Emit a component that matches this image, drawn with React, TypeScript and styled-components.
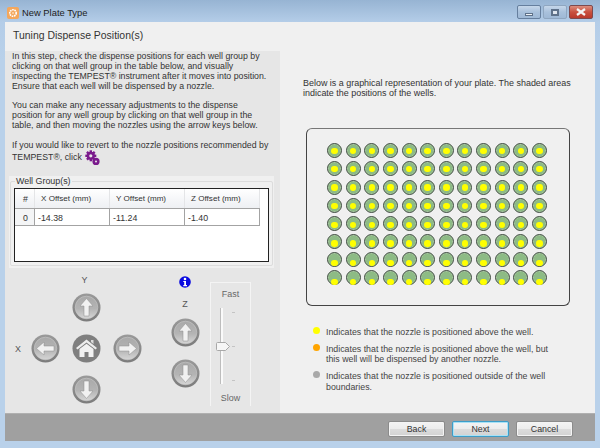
import React from "react";
import styled, { createGlobalStyle } from "styled-components";

const Global = createGlobalStyle`
  html, body { margin: 0; padding: 0; background: #b9d1ea; }
  * { box-sizing: border-box; }
`;

const Win = styled.div`
  width: 600px;
  height: 448px;
  display: flex;
  flex-direction: column;
  overflow: hidden;
  font-family: "Liberation Sans", Arial, sans-serif;
  font-size: 8.95px;
  line-height: 10px;
  white-space: nowrap;
  color: #333;
  background: linear-gradient(180deg, #97b4d3 0, #b4cde8 22px, #b9d1ea 60px);
`;

const TitleBar = styled.div`
  height: 22px;
  flex: none;
  display: flex;
  align-items: flex-start;
  padding-left: 7px;
`;

const AppIcon = styled.div`
  width: 12px;
  height: 12px;
  margin-top: 7px;
  border-radius: 2px;
  background: #f4a75c;
  display: flex;
  align-items: center;
  justify-content: center;
  flex: none;
`;

const Title = styled.span`
  margin: 7px 0 0 3px;
  font-size: 9.4px;
  line-height: 12px;
  color: #222;
`;

const WinButtons = styled.div`
  margin-left: auto;
  margin-right: 7px;
  margin-top: 5px;
  display: flex;
  gap: 2px;
`;

const WinButton = styled.div<{ $w: number; $close?: boolean; $dim?: boolean }>`
  width: ${(p) => p.$w}px;
  height: 14px;
  border: 1px solid ${(p) => (p.$close ? "#7d4a4e" : p.$dim ? "#8fa6c0" : "#667f9e")};
  border-radius: 2px;
  display: flex;
  align-items: center;
  justify-content: center;
  background: ${(p) =>
    p.$close
      ? "linear-gradient(180deg, #dc8d7e 0, #c9503f 50%, #b9392c 100%)"
      : "linear-gradient(180deg, #c6d7ea 0, #a9c1dc 50%, #9fb9d6 100%)"};
`;

const MinGlyph = styled.span`
  width: 8px;
  height: 3px;
  margin-top: 4px;
  background: #eef2f6;
  border: 1px solid #5f728a;
`;

const MaxGlyph = styled.span`
  width: 8px;
  height: 7px;
  background: #dfe6ee;
  border: 2px solid #5f728a;
`;

const Client = styled.div`
  flex: none;
  height: 419px;
  margin: 0 5px;
  display: flex;
  flex-direction: column;
  background: #f0f0f0;
`;

const Heading = styled.div`
  flex: none;
  height: 29px;
  padding: 6px 0 0 8px;
  font-size: 10.45px;
  line-height: 15px;
  color: #333;
`;

const Main = styled.div`
  flex: 1;
  display: flex;
  min-height: 0;
`;

const LeftPanel = styled.div`
  width: 275px;
  flex: none;
  background: #e6e6e6;
  padding: 1px 0 0 0;
  display: flex;
  flex-direction: column;
`;

const Instructions = styled.div`
  padding: 0 0 0 7px;
  height: 124px;
  flex: none;
  font-size: 8.78px;
`;

const Para = styled.p`
  margin: 0 0 9.6px;
  line-height: 9.9px;
`;

const Gear = styled.svg`
  vertical-align: -5px;
  margin-left: 1px;
`;

const GroupOuter = styled.div`
  margin-left: 4px;
  width: 265px;
  height: 92px;
  flex: none;
  background: #f0f0f0;
  padding: 1px 1px 0;
`;

const GroupBox = styled.fieldset`
  margin: 0;
  padding: 0 0 0 3px;
  height: 89px;
  border: 1px solid #dcdcdc;
  border-radius: 2px;
  min-width: 0;
`;

const GroupLegend = styled.legend`
  padding: 0 1px;
  margin-left: 1px;
  height: 9px;
  font-size: 8.9px;
  line-height: 9px;
`;

const TableFrame = styled.div`
  width: 255px;
  height: 74px;
  margin-top: 2px;
  border: 1px solid #222;
  background: #fff;
`;

const Cols = styled.div`
  display: grid;
  grid-template-columns: 20px 75px 75px 75px;
  width: 245px;
`;

const HeadCell = styled.div`
  height: 19px;
  padding: 5px 0 0 6px;
  background: linear-gradient(180deg, #ffffff 0, #f6f7f9 50%, #eef0f3 100%);
  border-right: 1px solid #e4e5e7;
  line-height: 10px;
  font-size: 8.1px;
  color: #333;
`;

const HashCell = styled(HeadCell)`
  padding-left: 8px;
  font-size: 8.8px;
`;

const BodyCell = styled.div`
  height: 18px;
  padding: 4px 0 0 3px;
  border-top: 1px solid #a3a3a3;
  border-bottom: 1px solid #a3a3a3;
  border-right: 1px solid #a3a3a3;
  background: #fff;
  font-size: 8.8px;
  color: #333;
`;

const IndexCell = styled(BodyCell)`
  padding-left: 8px;
  background: #f4f5f6;
`;

const Controls = styled.div`
  flex: 1;
  display: grid;
  grid-template-columns: 20px 41px 41px 41px 14px 46px 40px;
  grid-template-rows: 14px 41px 41px 41px;
  padding: 5px 0 0 0;
`;

const AxisLabel = styled.div<{ $col: number; $row: number; $shift: number }>`
  grid-column: ${(p) => p.$col};
  grid-row: ${(p) => p.$row};
  display: flex;
  align-items: center;
  justify-content: center;
  transform: translateX(${(p) => p.$shift}px);
  color: #555;
`;

const PadCell = styled.div<{ $col: number; $row: number }>`
  grid-column: ${(p) => p.$col};
  grid-row: ${(p) => p.$row};
  display: flex;
  align-items: center;
  justify-content: center;
`;

const ZColumn = styled.div`
  grid-column: 6;
  grid-row: 1 / 5;
  display: flex;
  flex-direction: column;
  align-items: center;
  padding-top: 3px;
`;

const ZLabel = styled.div`
  margin-top: 10px;
  height: 12px;
  line-height: 12px;
  color: #555;
`;

const ZGap = styled.div<{ $h: number }>`
  height: ${(p) => p.$h}px;
  flex: none;
`;

const SpeedBox = styled.div`
  grid-column: 7;
  grid-row: 1 / 5;
  width: 41px;
  height: 124px;
  margin-top: 9px;
  margin-left: 2px;
  border: 1px solid #f4f4f4;
  border-bottom: none;
  display: flex;
  flex-direction: column;
  align-items: center;
  justify-content: space-between;
  padding: 6px 0 3px;
  color: #666;
  position: relative;
`;

const Track = styled.div`
  position: absolute;
  left: 9px;
  top: 25px;
  width: 3px;
  height: 76px;
  background: #fafafa;
  border-left: 1px solid #bdbdbd;
`;

const Tick = styled.div<{ $top: number }>`
  position: absolute;
  left: 21px;
  top: ${(p) => p.$top}px;
  width: 3px;
  height: 1px;
  background: #c4c4c4;
`;

const Thumb = styled.svg`
  position: absolute;
  left: 5px;
  top: 59px;
`;

const RightPanel = styled.div`
  flex: 1;
  padding: 27px 0 0 23px;
  display: flex;
  flex-direction: column;
`;

const Intro = styled.p`
  margin: 0;
  line-height: 10.4px;
  flex: none;
`;

const Plate = styled.div`
  width: 264px;
  height: 178px;
  flex: none;
  margin: 29px 0 0 3px;
  border: 1px solid #444;
  border-top-color: #777;
  border-radius: 6px;
  padding: 14.5px 0 0 20px;
`;

const WellGrid = styled.div`
  display: grid;
  grid-template-columns: repeat(12, 18.64px);
  grid-auto-rows: 18.14px;
`;

const Well = styled.div`
  width: 15px;
  height: 15px;
  border-radius: 50%;
  border: 1px solid #454f47;
  background: #8dbb85;
  box-shadow: inset 0 0 0 0.5px #b7cfb0;
  position: relative;
`;

const Dot = styled.div<{ $row: number }>`
  position: absolute;
  left: 3.25px;
  top: ${(p) => 3.25 + p.$row * p.$row * 0.09}px;
  width: 6.5px;
  height: 6.5px;
  border-radius: 50%;
  background: #ffff00;
`;

const Legend = styled.div`
  margin: 21px 0 0 10px;
  display: flex;
  flex-direction: column;
  gap: 6.5px;
`;

const LegendRow = styled.div`
  display: grid;
  grid-template-columns: 7px 1fr;
  column-gap: 6px;
`;

const LegendDot = styled.div<{ $color: string }>`
  width: 7px;
  height: 7px;
  border-radius: 50%;
  background: ${(p) => p.$color};
`;

const LegendText = styled.div`
  line-height: 10.5px;
  font-size: 8.8px;
  color: #444;
`;

const Footer = styled.div`
  flex: none;
  height: 28px;
  background: #a0a0a0;
  border-top: 1px solid #b0b0b0;
  display: flex;
  justify-content: flex-end;
  align-items: flex-start;
  gap: 7px;
  padding: 7px 22px 0 0;
`;

const Btn = styled.button<{ $primary?: boolean }>`
  width: 57px;
  height: 16px;
  padding: 0;
  border: 1px solid ${(p) => (p.$primary ? "#3c9dc9" : "#8b8b8b")};
  border-radius: 2px;
  background: linear-gradient(180deg, #f4f4f4 0, #ececec 50%, #dcdcdc 51%, #d2d2d2 100%);
  box-shadow: ${(p) => (p.$primary ? "inset 0 0 0 1px #a9e2f6" : "inset 0 0 0 1px #f4f4f4")};
  font-family: "Liberation Sans", Arial, sans-serif;
  font-size: 8.8px;
  line-height: 12px;
  color: #333;
`;

type Dir = "up" | "down" | "left" | "right";
const rot: Record<Dir, number> = { up: 0, right: 90, down: 180, left: 270 };

// shiny round jog button, gradient id is shared so it only gets defined once
const Defs = () => (
  <svg width="0" height="0" style={{ position: "absolute" }}>
    <defs>
      <linearGradient id="jogFace" x1="0" y1="0" x2="0" y2="1">
        <stop offset="0" stopColor="#a9a9a9" />
        <stop offset="0.55" stopColor="#b4b4b4" />
        <stop offset="1" stopColor="#d6d6d6" />
      </linearGradient>
      <linearGradient id="jogRing" x1="0" y1="0" x2="0" y2="1">
        <stop offset="0" stopColor="#9a9a9a" />
        <stop offset="1" stopColor="#7c7c7c" />
      </linearGradient>
    </defs>
  </svg>
);

const ArrowBtn = ({ dir }: { dir: Dir }) => (
  <svg width="29" height="29" viewBox="0 0 29 29">
    <circle cx="14.5" cy="14.5" r="14" fill="url(#jogRing)" />
    <circle cx="14.5" cy="14.5" r="11.3" fill="url(#jogFace)" stroke="#c9c9c9" strokeWidth="0.6" />
    <g transform={`rotate(${rot[dir]} 14.5 14.5)`}>
      <path d="M14.5 5.5 L21 13 H17 V23 H12 V13 H8 Z" fill="#f1f1f1" stroke="#8f8f8f" strokeWidth="0.5" />
    </g>
  </svg>
);

const HomeBtn = () => (
  <svg width="29" height="29" viewBox="0 0 29 29">
    <circle cx="14.5" cy="14.5" r="14" fill="#7f7f7f" />
    <path d="M14.5 5.5 L25 14 L23.5 15.5 L14.5 8.5 L5.5 15.5 L4 14 Z" fill="#ededed" />
    <path d="M19 6 H21.5 V10 L19 8 Z" fill="#dcdcdc" />
    <path d="M7.5 15 L14.5 9.8 L21.5 15 V23 H16.5 V18 H12.5 V23 H7.5 Z" fill="#f1f1f1" />
  </svg>
);

const GearIcon = () => (
  <Gear width="15" height="15" viewBox="0 0 15 15">
    <g fill="#7a1a8c">
      <g>
        {[0, 45, 90, 135, 180, 225, 270, 315].map((a) => (
          <rect key={a} x="4.6" y="0.3" width="2.4" height="2.6" transform={`rotate(${a} 5.8 5.8)`} />
        ))}
        <path fillRule="evenodd" d="M5.8 1.7a4.1 4.1 0 1 0 0 8.2a4.1 4.1 0 1 0 0-8.2zM5.8 4.2a1.6 1.6 0 1 1 0 3.2a1.6 1.6 0 1 1 0-3.2z" />
      </g>
      <path fillRule="evenodd" d="M11 7.8a3.6 3.6 0 1 0 0 7.2a3.6 3.6 0 1 0 0-7.2zM11 10.4a1 1 0 1 1 0 2a1 1 0 1 1 0-2z" />
    </g>
  </Gear>
);

const InfoIcon = () => (
  <svg width="12" height="12" viewBox="0 0 12 12">
    <circle cx="6" cy="6" r="5.8" fill="#0a0ae0" />
    <circle cx="6" cy="3" r="1.3" fill="#fff" />
    <path d="M4.3 5H7V9H8V10.2H4.3V9H5.2V6.1H4.3Z" fill="#fff" />
  </svg>
);

const Flower = () => (
  <svg width="10" height="10" viewBox="0 0 10 10">
    <circle cx="5" cy="5" r="3.2" fill="none" stroke="#fff" strokeWidth="1.6" strokeDasharray="1.6 0.7" />
    <circle cx="5" cy="5" r="1" fill="#fbd9b5" />
  </svg>
);

const wells = Array.from({ length: 96 }, (_, i) => ({ id: i, row: Math.floor(i / 12) }));

export default function App() {
  return (
    <Win>
      <Global />
      <Defs />
      <TitleBar>
        <AppIcon>
          <Flower />
        </AppIcon>
        <Title>New Plate Type</Title>
        <WinButtons>
          <WinButton $w={24}>
            <MinGlyph />
          </WinButton>
          <WinButton $w={24} $dim>
            <MaxGlyph />
          </WinButton>
          <WinButton $w={24} $close>
            <svg width="10" height="8" viewBox="0 0 10 8">
              <path d="M1 1 L9 7 M9 1 L1 7" stroke="#f4f4f4" strokeWidth="2.2" />
            </svg>
          </WinButton>
        </WinButtons>
      </TitleBar>
      <Client>
        <Heading>Tuning Dispense Position(s)</Heading>
        <Main>
          <LeftPanel>
            <Instructions>
              <Para>
                In this step, check the dispense positions for each well group by
                <br />
                clicking on that well group in the table below, and visually
                <br />
                inspecting the TEMPEST® instrument after it moves into position.
                <br />
                Ensure that each well will be dispensed by a nozzle.
              </Para>
              <Para>
                You can make any necessary adjustments to the dispense
                <br />
                position for any well group by clicking on that well group in the
                <br />
                table, and then moving the nozzles using the arrow keys below.
              </Para>
              <Para>
                If you would like to revert to the nozzle positions recommended by
                <br />
                TEMPEST®, click <GearIcon />
              </Para>
            </Instructions>
            <GroupOuter>
              <GroupBox>
                <GroupLegend>Well Group(s)</GroupLegend>
                <TableFrame>
                  <Cols>
                    <HashCell>#</HashCell>
                    <HeadCell>X Offset (mm)</HeadCell>
                    <HeadCell>Y Offset (mm)</HeadCell>
                    <HeadCell>Z Offset (mm)</HeadCell>
                    <IndexCell>0</IndexCell>
                    <BodyCell>-14.38</BodyCell>
                    <BodyCell>-11.24</BodyCell>
                    <BodyCell>-1.40</BodyCell>
                  </Cols>
                </TableFrame>
              </GroupBox>
            </GroupOuter>
            <Controls>
              <AxisLabel $col={3} $row={1} $shift={-2}>Y</AxisLabel>
              <PadCell $col={3} $row={2}>
                <ArrowBtn dir="up" />
              </PadCell>
              <AxisLabel $col={1} $row={3} $shift={3}>X</AxisLabel>
              <PadCell $col={2} $row={3}>
                <ArrowBtn dir="left" />
              </PadCell>
              <PadCell $col={3} $row={3}>
                <HomeBtn />
              </PadCell>
              <PadCell $col={4} $row={3}>
                <ArrowBtn dir="right" />
              </PadCell>
              <PadCell $col={3} $row={4}>
                <ArrowBtn dir="down" />
              </PadCell>
              <ZColumn>
                <InfoIcon />
                <ZLabel>Z</ZLabel>
                <ZGap $h={8} />
                <ArrowBtn dir="up" />
                <ZGap $h={12} />
                <ArrowBtn dir="down" />
              </ZColumn>
              <SpeedBox>
                <span>Fast</span>
                <Track />
                <Tick $top={29} />
                <Tick $top={63} />
                <Tick $top={97} />
                <Thumb width="14" height="9" viewBox="0 0 14 9">
                  <path d="M1.5 .5H9.5L13.5 4.5L9.5 8.5H1.5Q.5 8.5 .5 7.5V1.5Q.5 .5 1.5 .5Z" fill="#f6f6f6" stroke="#a8a8a8" />
                </Thumb>
                <span>Slow</span>
              </SpeedBox>
            </Controls>
          </LeftPanel>
          <RightPanel>
            <Intro>
              Below is a graphical representation of your plate. The shaded areas
              <br />
              indicate the positions of the wells.
            </Intro>
            <Plate>
              <WellGrid>
                {wells.map((w) => (
                  <Well key={w.id}>
                    <Dot $row={w.row} />
                  </Well>
                ))}
              </WellGrid>
            </Plate>
            <Legend>
              <LegendRow>
                <LegendDot $color="#ffff00" />
                <LegendText>Indicates that the nozzle is positioned above the well.</LegendText>
              </LegendRow>
              <LegendRow>
                <LegendDot $color="#ffa500" />
                <LegendText>
                  Indicates that the nozzle is positioned above the well, but
                  <br />
                  this well will be dispensed by another nozzle.
                </LegendText>
              </LegendRow>
              <LegendRow>
                <LegendDot $color="#a9a9a9" />
                <LegendText>
                  Indicates that the nozzle is positioned outside of the well
                  <br />
                  boundaries.
                </LegendText>
              </LegendRow>
            </Legend>
          </RightPanel>
        </Main>
        <Footer>
          <Btn>Back</Btn>
          <Btn $primary>Next</Btn>
          <Btn>Cancel</Btn>
        </Footer>
      </Client>
    </Win>
  );
}
